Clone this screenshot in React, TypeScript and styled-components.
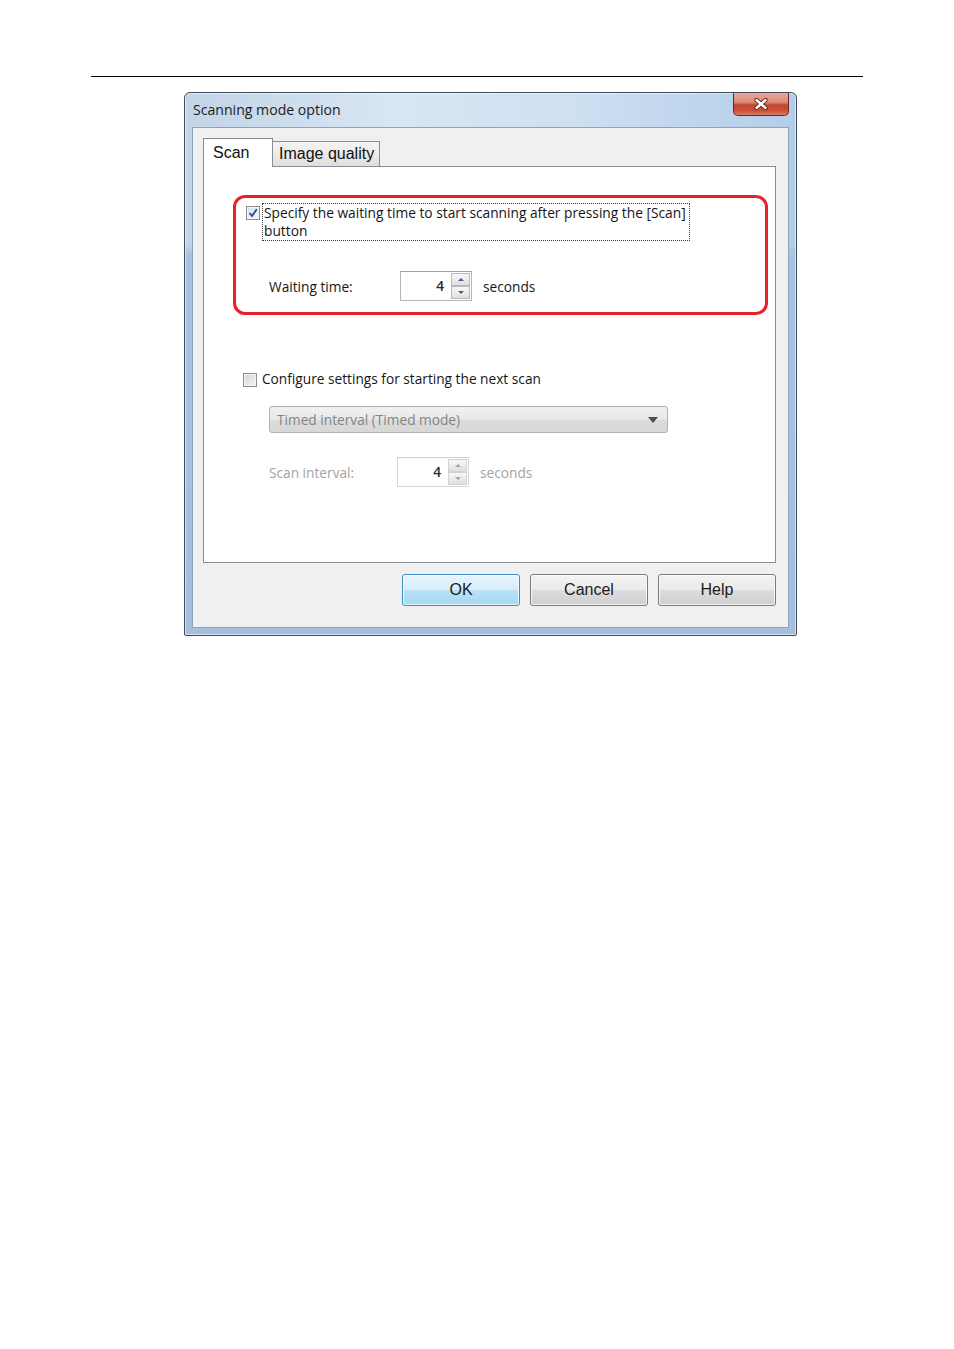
import styled, { createGlobalStyle } from "styled-components";

const GlobalStyle = createGlobalStyle`
  body {
    margin: 0;
    background: #fff;
  }
`;

const ui = `"Open Sans", "Noto Sans", sans-serif`;
const classic = `"Liberation Sans", Arial, sans-serif`;

const Page = styled.div`
  width: 954px;
  min-height: 1349px;
  padding-top: 76px;
  box-sizing: border-box;
`;

const Rule = styled.div`
  margin-left: 91px;
  width: 772px;
  border-top: 1px solid #000;
`;

const Window = styled.div`
  margin: 15px 0 0 184px;
  width: 613px;
  height: 544px;
  box-sizing: border-box;
  border: 1px solid #3f4b5a;
  border-radius: 6px 6px 2px 2px;
  padding: 0 7px 7px;
  display: flex;
  flex-direction: column;
  background:
    linear-gradient(180deg, rgba(168, 195, 223, 0) 0, rgba(168, 195, 223, 0) 150px, #a8c3df 162px, #a3bfdc 100%),
    linear-gradient(90deg, #c2d4e8 0%, #d9e6f3 35%, #cddff1 65%, #b3cde9 100%);
  box-shadow: inset 0 0 0 1px rgba(255, 255, 255, 0.55);
`;

const TitleBar = styled.div`
  height: 34px;
  display: flex;
  justify-content: space-between;
  align-items: flex-start;
`;

const Title = styled.div`
  padding: 8px 0 0 1px;
  font-family: ${ui};
  font-size: 14.1px;
  line-height: 18px;
  color: #1b1b1b;
`;

const CloseButton = styled.div`
  width: 56px;
  height: 23px;
  box-sizing: border-box;
  border: 1px solid #6e2a20;
  border-top: none;
  border-radius: 0 0 5px 5px;
  background: linear-gradient(180deg, #e9aa9c 0%, #db8a77 42%, #c4462d 55%, #c9533a 82%, #dd7c63 100%);
  display: flex;
  align-items: center;
  justify-content: center;
`;

const Client = styled.div`
  flex: 1;
  border: 1px solid #8ea4bb;
  background: #f0f0f0;
  padding: 10px 12px 21px 10px;
  display: flex;
  flex-direction: column;
`;

const TabRow = styled.div`
  display: flex;
  align-items: flex-end;
  height: 28px;
`;

const Tab = styled.div<{ $active?: boolean }>`
  box-sizing: border-box;
  border: 1px solid #898c95;
  border-bottom: none;
  font-family: ${classic};
  font-size: 16px;
  line-height: 20px;
  color: #111;
  position: relative;
  ${(p) =>
    p.$active
      ? `
    width: 70px;
    height: 29px;
    margin-bottom: -1px;
    padding: 4px 0 0 9px;
    background: #fff;
    z-index: 1;
  `
      : `
    width: 108px;
    height: 25px;
    margin-left: -1px;
    padding: 2px 0 0 6px;
    background: linear-gradient(180deg, #f4f4f4 0%, #ebebeb 50%, #dedede 100%);
  `}
`;

const Panel = styled.div`
  height: 397px;
  box-sizing: border-box;
  border: 1px solid #898c95;
  background: #fff;
  padding: 28px 0 0 29px;
  display: flex;
  flex-direction: column;
`;

const RedBox = styled.div`
  width: 535px;
  height: 120px;
  box-sizing: border-box;
  border: 3px solid #e8202a;
  border-radius: 12px;
  padding: 5px 0 0 10px;
`;

const CheckRow = styled.div<{ $indent?: number; $top?: number }>`
  display: flex;
  align-items: flex-start;
  margin-left: ${(p) => p.$indent ?? 0}px;
  margin-top: ${(p) => p.$top ?? 0}px;
`;

const Box = styled.span<{ $checked?: boolean }>`
  width: 14px;
  height: 14px;
  flex: none;
  box-sizing: border-box;
  border: 1px solid #8e8f8f;
  margin-top: 3px;
  display: flex;
  align-items: center;
  justify-content: center;
  background: ${(p) =>
    p.$checked
      ? "linear-gradient(135deg, #cfe0f3 0%, #e9f1fa 60%, #f6f9fd 100%)"
      : "linear-gradient(135deg, #d7d7d7 0%, #e8e8e8 60%, #f6f6f6 100%)"};
  box-shadow: inset 0 0 0 1px #f4f4f4;
`;

const FocusLabel = styled.div`
  margin-left: 2px;
  border: 1px dotted #3a3a3a;
  padding: 0 3px 0 1px;
  font-family: ${ui};
  font-size: 13.75px;
  line-height: 18px;
  color: #161616;
`;

const CheckText = styled.div`
  margin-left: 5px;
  font-family: ${ui};
  font-size: 13.7px;
  line-height: 18px;
  color: #161616;
`;

const FieldRow = styled.div<{ $indent: number; $top: number }>`
  display: flex;
  align-items: center;
  margin-left: ${(p) => p.$indent}px;
  margin-top: ${(p) => p.$top}px;
`;

const FieldLabel = styled.div<{ $width: number; $disabled?: boolean }>`
  width: ${(p) => p.$width}px;
  font-family: ${ui};
  font-size: 13.7px;
  color: ${(p) => (p.$disabled ? "#a3a3a3" : "#161616")};
`;

const Units = styled.div<{ $disabled?: boolean }>`
  margin-left: 11px;
  font-family: ${ui};
  font-size: 13.7px;
  color: ${(p) => (p.$disabled ? "#a3a3a3" : "#161616")};
`;

const Spin = styled.div<{ $disabled?: boolean }>`
  display: flex;
  width: 72px;
  height: 30px;
  box-sizing: border-box;
  border: 1px solid ${(p) => (p.$disabled ? "#d6d6d6" : "#b4b6bc")};
  border-top-color: ${(p) => (p.$disabled ? "#cfcfcf" : "#9fa2aa")};
  background: #fff;
`;

const SpinValue = styled.div`
  flex: 1;
  text-align: right;
  padding-right: 6px;
  font-family: ${ui};
  font-size: 13.7px;
  font-weight: 600;
  line-height: 27px;
  color: #2a2a2a;
`;

const SpinButtons = styled.div`
  width: 19px;
  margin: 1px;
  display: flex;
  flex-direction: column;
`;

const SpinButton = styled.div<{ $disabled?: boolean }>`
  flex: 1;
  box-sizing: border-box;
  border: 1px solid ${(p) => (p.$disabled ? "#d2d2d2" : "#b9b9b9")};
  background: linear-gradient(180deg, #f7f7f7 0%, #ececec 50%, #dfdfdf 100%);
  display: flex;
  align-items: center;
  justify-content: center;
`;

const Arrow = styled.span<{ $down?: boolean; $disabled?: boolean }>`
  width: 0;
  height: 0;
  border-left: 3px solid transparent;
  border-right: 3px solid transparent;
  ${(p) =>
    p.$down
      ? `border-top: 3px solid ${p.$disabled ? "#9aa6b5" : "#45628a"};`
      : `border-bottom: 3px solid ${p.$disabled ? "#9aa6b5" : "#45628a"};`}
`;

const Select = styled.div`
  margin: 18px 0 0 36px;
  width: 399px;
  height: 27px;
  box-sizing: border-box;
  border: 1px solid #b0b0b0;
  border-radius: 3px;
  background: linear-gradient(180deg, #f1f1f1 0%, #e8e8e8 50%, #dcdcdc 51%, #d8d8d8 100%);
  display: flex;
  align-items: center;
  justify-content: space-between;
  padding: 0 9px 0 7px;
  font-family: ${ui};
  font-size: 13.7px;
  color: #838383;
`;

const SelectArrow = styled.span`
  width: 0;
  height: 0;
  border-left: 5px solid transparent;
  border-right: 5px solid transparent;
  border-top: 6px solid #4e4e4e;
`;

const ButtonRow = styled.div`
  margin-top: 11px;
  display: flex;
  justify-content: flex-end;
  gap: 10px;
`;

const Button = styled.div<{ $primary?: boolean }>`
  width: 118px;
  height: 32px;
  box-sizing: border-box;
  border: 1px solid ${(p) => (p.$primary ? "#3d8ec4" : "#7a7a7a")};
  border-radius: 3px;
  background: ${(p) =>
    p.$primary
      ? "linear-gradient(180deg, #e5f4fc 0%, #d6eefb 48%, #b7e1f7 52%, #a8d8f3 100%)"
      : "linear-gradient(180deg, #f3f3f3 0%, #ebebeb 48%, #dddddd 52%, #cfcfcf 100%)"};
  box-shadow: inset 0 0 0 1px rgba(255, 255, 255, 0.7);
  display: flex;
  align-items: center;
  justify-content: center;
  font-family: ${classic};
  font-size: 16px;
  color: #1a1a1a;
`;

const Spinner = ({ value, disabled }: { value: string; disabled?: boolean }) => (
  <Spin $disabled={disabled}>
    <SpinValue>{value}</SpinValue>
    <SpinButtons>
      <SpinButton $disabled={disabled}>
        <Arrow $disabled={disabled} />
      </SpinButton>
      <SpinButton $disabled={disabled}>
        <Arrow $down $disabled={disabled} />
      </SpinButton>
    </SpinButtons>
  </Spin>
);

const App = () => {
  return (
    <Page>
      <GlobalStyle />
      <Rule />
      <Window>
        <TitleBar>
          <Title>Scanning mode option</Title>
          <CloseButton>
            <svg width="16" height="12" viewBox="0 0 16 12">
              <path
                d="M3.5 2 L12.5 10 M12.5 2 L3.5 10"
                stroke="#5a1d14"
                strokeWidth="4.2"
                strokeLinecap="round"
              />
              <path
                d="M3.5 2 L12.5 10 M12.5 2 L3.5 10"
                stroke="#fff"
                strokeWidth="2.4"
                strokeLinecap="round"
              />
            </svg>
          </CloseButton>
        </TitleBar>
        <Client>
          <TabRow>
            <Tab $active>Scan</Tab>
            <Tab>Image quality</Tab>
          </TabRow>
          <Panel>
            <RedBox>
              <CheckRow>
                <Box $checked>
                  <svg width="10" height="10" viewBox="0 0 10 10">
                    <path
                      d="M1.5 5 L4 8 L8.8 1.2"
                      fill="none"
                      stroke="#2b4c85"
                      strokeWidth="1.8"
                    />
                  </svg>
                </Box>
                <FocusLabel>
                  Specify the waiting time to start scanning after pressing the [Scan]
                  <br />
                  button
                </FocusLabel>
              </CheckRow>
              <FieldRow $indent={23} $top={30}>
                <FieldLabel $width={131}>Waiting time:</FieldLabel>
                <Spinner value="4" />
                <Units>seconds</Units>
              </FieldRow>
            </RedBox>
            <CheckRow $indent={10} $top={55}>
              <Box />
              <CheckText>Configure settings for starting the next scan</CheckText>
            </CheckRow>
            <Select>
              <span>Timed interval (Timed mode)</span>
              <SelectArrow />
            </Select>
            <FieldRow $indent={36} $top={24}>
              <FieldLabel $width={128} $disabled>
                Scan interval:
              </FieldLabel>
              <Spinner value="4" disabled />
              <Units $disabled>seconds</Units>
            </FieldRow>
          </Panel>
          <ButtonRow>
            <Button $primary>OK</Button>
            <Button>Cancel</Button>
            <Button>Help</Button>
          </ButtonRow>
        </Client>
      </Window>
    </Page>
  );
};

export default App;
